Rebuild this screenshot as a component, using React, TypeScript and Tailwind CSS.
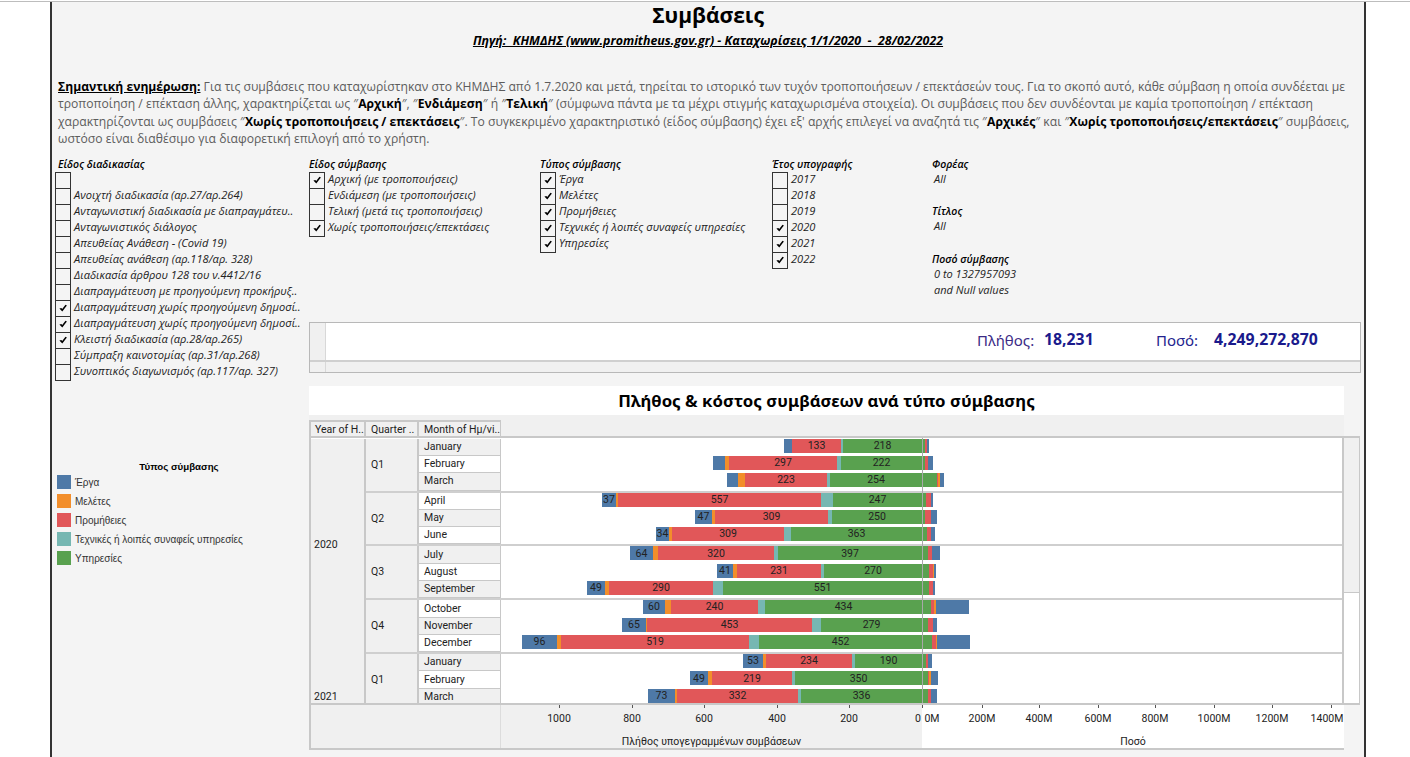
import { Fragment } from "react";

const BLUE = "#4e79a7";
const ORANGE = "#f28e2b";
const RED = "#e15759";
const TEAL = "#76b7b2";
const GREEN = "#59a14f";

const procedures = [
  ["", false],
  ["Ανοιχτή διαδικασία (αρ.27/αρ.264)", false],
  ["Ανταγωνιστική διαδικασία με διαπραγμάτευ..", false],
  ["Ανταγωνιστικός διάλογος", false],
  ["Απευθείας Ανάθεση - (Covid 19)", false],
  ["Απευθείας ανάθεση (αρ.118/αρ. 328)", false],
  ["Διαδικασία άρθρου 128 του ν.4412/16", false],
  ["Διαπραγμάτευση με προηγούμενη προκήρυξ..", false],
  ["Διαπραγμάτευση χωρίς προηγούμενη δημοσί..", true],
  ["Διαπραγμάτευση χωρίς προηγούμενη δημοσί..", true],
  ["Κλειστή διαδικασία (αρ.28/αρ.265)", true],
  ["Σύμπραξη καινοτομίας (αρ.31/αρ.268)", false],
  ["Συνοπτικός διαγωνισμός (αρ.117/αρ. 327)", false],
] as [string, boolean][];

const contractKinds = [
  ["Αρχική (με τροποποιήσεις)", true],
  ["Ενδιάμεση (με τροποποιήσεις)", false],
  ["Τελική (μετά τις τροποποιήσεις)", false],
  ["Χωρίς τροποποιήσεις/επεκτάσεις", true],
] as [string, boolean][];

const contractTypes = [
  ["Έργα", true],
  ["Μελέτες", true],
  ["Προμήθειες", true],
  ["Τεχνικές ή λοιπές συναφείς υπηρεσίες", true],
  ["Υπηρεσίες", true],
] as [string, boolean][];

const years = [
  ["2017", false],
  ["2018", false],
  ["2019", false],
  ["2020", true],
  ["2021", true],
  ["2022", true],
] as [string, boolean][];

const legend = [
  ["Έργα", BLUE],
  ["Μελέτες", ORANGE],
  ["Προμήθειες", RED],
  ["Τεχνικές ή λοιπές συναφείς υπηρεσίες", TEAL],
  ["Υπηρεσίες", GREEN],
];

// pixel edges of the bar pieces: start, blue, orange, red, teal, green, red, orange, blue
type Row = { month: string; edges: number[]; blue?: string; red: string; green: string };

const data: { year: string; quarters: { name: string; rows: Row[] }[] }[] = [
  {
    year: "2020",
    quarters: [
      {
        name: "Q1",
        rows: [
          { month: "January", edges: [784, 792, 792, 841, 843, 925, 927, 927, 929], red: "133", green: "218" },
          { month: "February", edges: [713, 725, 729, 837, 841, 925, 928, 928, 933], red: "297", green: "222" },
          { month: "March", edges: [727, 738, 745, 827, 830, 937, 938, 940, 944], red: "223", green: "254" },
        ],
      },
      {
        name: "Q2",
        rows: [
          { month: "April", edges: [602, 616, 618, 821, 833, 926, 931, 931, 933], blue: "37", red: "557", green: "247" },
          { month: "May", edges: [695, 712, 715, 828, 832, 925, 931, 931, 937], blue: "47", red: "309", green: "250" },
          { month: "June", edges: [656, 669, 672, 784, 791, 927, 931, 931, 935], blue: "34", red: "309", green: "363" },
        ],
      },
      {
        name: "Q3",
        rows: [
          { month: "July", edges: [630, 653, 658, 774, 778, 928, 932, 932, 940], blue: "64", red: "320", green: "397" },
          { month: "August", edges: [717, 733, 737, 821, 824, 929, 933, 934, 936], blue: "41", red: "231", green: "270" },
          { month: "September", edges: [587, 605, 609, 713, 723, 929, 933, 933, 935], blue: "49", red: "290", green: "551" },
        ],
      },
      {
        name: "Q4",
        rows: [
          { month: "October", edges: [643, 665, 671, 758, 765, 931, 934, 936, 969], blue: "60", red: "240", green: "434" },
          { month: "November", edges: [622, 646, 647, 812, 821, 928, 933, 933, 937], blue: "65", red: "453", green: "279" },
          { month: "December", edges: [522, 557, 561, 749, 759, 932, 936, 937, 970], blue: "96", red: "519", green: "452" },
        ],
      },
    ],
  },
  {
    year: "2021",
    quarters: [
      {
        name: "Q1",
        rows: [
          { month: "January", edges: [743, 763, 766, 852, 855, 926, 928, 928, 932], blue: "53", red: "234", green: "190" },
          { month: "February", edges: [690, 708, 712, 792, 795, 928, 929, 931, 938], blue: "49", red: "219", green: "350" },
          { month: "March", edges: [648, 675, 677, 798, 801, 928, 931, 931, 937], blue: "73", red: "332", green: "336" },
        ],
      },
    ],
  },
];

const leftTicks = [
  ["1000", 559],
  ["800", 632],
  ["600", 704],
  ["400", 777],
  ["200", 849],
  ["0", 918],
] as [string, number][];

const rightTicks = [
  ["0M", 932, 923],
  ["200M", 982, 982],
  ["400M", 1039, 1039],
  ["600M", 1098, 1098],
  ["800M", 1155, 1155],
  ["1000M", 1214, 1214],
  ["1200M", 1272, 1272],
  ["1400M", 1327, 1331],
] as [string, number, number][];

function Tick() {
  return (
    <svg viewBox="0 0 10 10" className="h-[10px] w-[10px]">
      <path d="M1.4 5.6 L3.4 4.9 L4.2 6 L7.5 1.8 L8.9 2.4 L4.3 8.6 Z" fill="#000" />
    </svg>
  );
}

function CheckList({ items, width = "w-[226px]" }: { items: [string, boolean][]; width?: string }) {
  return (
    <div className={width}>
      {items.map(([label, checked], i) => (
        <div key={i} className="flex h-4 items-start">
          <div className="flex h-[17px] w-[16px] shrink-0 items-center justify-center border border-[#333]">
            {checked ? <Tick /> : null}
          </div>
          <span className="ml-[3px] whitespace-nowrap text-[11.1px] leading-[13px] italic text-[#222]">{label}</span>
        </div>
      ))}
    </div>
  );
}

function FilterTitle({ children }: { children: string }) {
  return <div className="h-[15px] whitespace-nowrap text-[10.5px] leading-[15px] font-semibold italic text-black">{children}</div>;
}

function Bar({ row }: { row: Row }) {
  const e = row.edges;
  const pieces: [number, number, string, string?][] = [
    [e[0], e[1], BLUE, row.blue],
    [e[1], e[2], ORANGE],
    [e[2], e[3], RED, row.red],
    [e[3], e[4], TEAL],
    [e[4], 922, GREEN, row.green],
    [922, e[5], GREEN],
    [e[5], e[6], RED],
    [e[6], e[7], ORANGE],
    [e[7], e[8], BLUE],
  ];
  return (
    <div className="flex h-[14px]" style={{ marginLeft: e[0] - 501 }}>
      {pieces.map(([from, to, color, label], i) => (
        <div
          key={i}
          className="flex h-full shrink-0 items-center justify-center overflow-visible text-[10.5px] text-[#222]"
          style={{ width: to - from, backgroundColor: color }}
        >
          {label}
        </div>
      ))}
    </div>
  );
}

function StatsBox() {
  return (
    <div className="mt-[15px] flex h-[51px] w-[1052px] flex-col border border-[#b8b8b8] bg-white">
      <div className="flex min-h-0 flex-1">
        <div className="w-[16px] border-r border-[#d8d8d8] bg-[#f0f0f0]" />
        <div className="flex flex-1 items-center pb-[2px] pl-[651px] font-['Noto_Sans',sans-serif] text-[15px]">
          <span className="w-[67px] text-[#3b2b86]">Πλήθος:</span>
          <span className="w-[112px] text-[15.8px] font-bold text-[#1a1a8c]">18,231</span>
          <span className="w-[58px] text-[#23238e]">Ποσό:</span>
          <span className="text-[15.8px] font-bold text-[#1a1a8c]">4,249,272,870</span>
        </div>
      </div>
      <div className="flex h-[12px] border-t-2 border-[#cfcfcf] bg-[#f0f0f0]">
        <div className="w-[16px] border-r border-[#d8d8d8]" />
      </div>
    </div>
  );
}

function Chart() {
  return (
    <div className="mt-[13px] font-['Roboto',sans-serif] text-[#222]">
      <div className="flex h-[29px] w-[1035px] items-center justify-center bg-white font-['Noto_Sans',sans-serif] text-[16.8px] font-bold text-black">
        Πλήθος &amp; κόστος συμβάσεων ανά τύπο σύμβασης
      </div>
      <div className="flex h-[21px] w-[1035px] items-end bg-[#f0f0f0] text-[10.5px] leading-[12px]">
        <div className="flex h-4 w-[57px] items-center border-2 border-b-0 border-[#c8c8c8] pt-[3px] pl-1 whitespace-nowrap">Year of H..</div>
        <div className="flex h-4 w-[53px] items-center border-t-2 border-r-2 border-[#c8c8c8] pt-[3px] pl-[5px] whitespace-nowrap">Quarter ..</div>
        <div className="flex h-4 w-[82px] items-center border-t-2 border-r border-[#c8c8c8] pt-[3px] pl-[5px] whitespace-nowrap">Month of Hμ/vi..</div>
      </div>
      <div className="flex w-[1051px]">
        <div className="relative h-[269px] w-[1035px] overflow-hidden border-y-2 border-l-2 border-[#c8c8c8] bg-white pt-px text-[10.5px]">
          {data.map((y) => (
            <div key={y.year} className="flex">
              <div
                className={
                  y.year === "2020"
                    ? "flex w-[55px] shrink-0 items-center border-r-2 border-[#c8c8c8] bg-[#f0f0f0] pb-[3px] pl-[3px]"
                    : "flex w-[55px] shrink-0 items-end border-r-2 border-[#c8c8c8] bg-[#f0f0f0] pb-[3px] pl-[3px]"
                }
              >
                {y.year}
              </div>
              <div className="flex-1">
                {y.quarters.map((q) => (
                  <div key={q.name} className="flex border-b-2 border-[#cfcfcf]">
                    <div className="flex w-[53px] shrink-0 items-center border-r-2 border-[#c8c8c8] bg-[#f0f0f0] pl-[5px]">{q.name}</div>
                    <div className="flex-1">
                      {q.rows.map((r, i) => (
                        <div key={r.month} className="flex h-[17.3px]">
                          <div
                            className={
                              (i + (q.name === "Q1" ? 0 : q.name === "Q2" ? 1 : q.name === "Q3" ? 0 : 1)) % 2 === 0
                                ? "flex w-[82px] shrink-0 items-center border-r border-b border-[#c8c8c8] bg-[#f0f0f0] pl-[5px]"
                                : "flex w-[82px] shrink-0 items-center border-r border-b border-[#c8c8c8] bg-white pl-[5px]"
                            }
                          >
                            {r.month}
                          </div>
                          <div className="flex-1 bg-white">
                            <Bar row={r} />
                          </div>
                        </div>
                      ))}
                    </div>
                  </div>
                ))}
              </div>
            </div>
          ))}
          <div className="absolute top-0 bottom-0 left-[611px] w-px bg-[#a8a8a8]" />
          <div className="absolute top-0 right-0 bottom-0 w-[2px] bg-[#c8c8c8]" />
        </div>
        <div className="h-[269px] w-[16px] border-y-2 border-r border-[#c8c8c8] bg-white">
          <div className="h-[155px] border-b border-[#c8c8c8] bg-[#f0f0f0]" />
        </div>
      </div>
      <div className="relative flex h-[45px] w-[1035px] text-[10.5px]">
        <div className="flex w-[613px] border-b-2 border-l-2 border-[#c8c8c8] bg-[#f0f0f0]">
          <div className="w-[190px] border-r border-[#dcdcdc]" />
          <div className="flex flex-1 items-end justify-center leading-[12px]">Πλήθος υπογεγραμμένων συμβάσεων</div>
        </div>
        <div className="flex flex-1 items-end justify-center border-b-2 border-[#c8c8c8] bg-white leading-[12px]">Ποσό</div>
        {leftTicks.map(([label, x]) => (
          <Fragment key={label}>
            {label !== "0" ? <div className="absolute top-0 h-[3px] w-px bg-[#555]" style={{ left: x - 309 }} /> : null}
            <div className="absolute top-[6px] -translate-x-1/2" style={{ left: x - 309 }}>
              {label}
            </div>
          </Fragment>
        ))}
        <div className="absolute top-0 h-[3px] w-px bg-[#555]" style={{ left: 613 }} />
        {rightTicks.map(([label, x, tick]) => (
          <Fragment key={label}>
            {label !== "0M" ? <div className="absolute top-0 h-[3px] w-px bg-[#555]" style={{ left: tick - 309 }} /> : null}
            <div className="absolute top-[6px] -translate-x-1/2" style={{ left: x - 309 }}>
              {label}
            </div>
          </Fragment>
        ))}
      </div>
    </div>
  );
}

export default function App() {
  return (
    <div className="h-[757px] w-[1410px] overflow-hidden bg-white font-['Open_Sans',sans-serif]">
      <div className="mt-px h-[756px] border-t border-[#bdbdbd]">
        <div className="ml-[50px] h-full w-[1316px] border-x-2 border-[#333] bg-[#f4f4f4]">
          <div className="text-center">
            <h1 className="pt-px text-[21px] leading-[24px] font-bold text-black">Συμβάσεις</h1>
            <p className="mt-[5px] text-[12.4px] leading-[18px] font-bold italic text-black underline">
              Πηγή:&nbsp; ΚΗΜΔΗΣ (www.promitheus.gov.gr) - Καταχωρίσεις 1/1/2020&nbsp; -&nbsp; 28/02/2022
            </p>
          </div>
          <div className="mt-[28px] ml-[6px] whitespace-nowrap text-[12.15px] leading-[17.4px] text-[#5c5c5c]">
            <div>
              <b className="font-bold text-black underline">Σημαντική ενημέρωση:</b> Για τις συμβάσεις που καταχωρίστηκαν στο ΚΗΜΔΗΣ από 1.7.2020 και μετά, τηρείται το ιστορικό των τυχόν τροποποιήσεων / επεκτάσεών τους. Για το σκοπό αυτό, κάθε σύμβαση η οποία συνδέεται με
            </div>
            <div>
              τροποποίηση / επέκταση άλλης, χαρακτηρίζεται ως ″<b className="text-black">Αρχική</b>″, ″<b className="text-black">Ενδιάμεση</b>″ ή ″<b className="text-black">Τελική</b>″ (σύμφωνα πάντα με τα μέχρι στιγμής καταχωρισμένα στοιχεία). Οι συμβάσεις που δεν συνδέονται με καμία τροποποίηση / επέκταση
            </div>
            <div>
              χαρακτηρίζονται ως συμβάσεις ″<b className="text-black">Χωρίς τροποποιήσεις / επεκτάσεις</b>″. Το συγκεκριμένο χαρακτηριστικό (είδος σύμβασης) έχει εξ' αρχής επιλεγεί να αναζητά τις ″<b className="text-black">Αρχικές</b>″ και ″<b className="text-black">Χωρίς τροποποιήσεις/επεκτάσεις</b>″ συμβάσεις,
            </div>
            <div>ωστόσο είναι διαθέσιμο για διαφορετική επιλογή από το χρήστη.</div>
          </div>
          <div className="mt-[9px] flex">
            <div className="w-[257px] shrink-0">
              <div className="pl-[6px]">
                <FilterTitle>Είδος διαδικασίας</FilterTitle>
              </div>
              <div className="pl-[3px]">
                <CheckList items={procedures} />
              </div>
              <div className="mt-[80px] pl-[5px] font-['Liberation_Sans',sans-serif] text-[10px]">
                <div className="h-[13px] pr-[8px] text-center text-[9.7px] font-bold text-black">Τύπος σύμβασης</div>
                {legend.map(([label, color]) => (
                  <div key={label} className="flex h-[19px] items-center">
                    <div className="h-[14px] w-[14px]" style={{ backgroundColor: color }} />
                    <span className="ml-[4px] whitespace-nowrap text-[#333]">{label}</span>
                  </div>
                ))}
              </div>
            </div>
            <div>
              <div className="flex h-[150px]">
                <div className="w-[231px]">
                  <FilterTitle>Είδος σύμβασης</FilterTitle>
                  <CheckList items={contractKinds} width="w-[231px]" />
                </div>
                <div className="w-[232px]">
                  <FilterTitle>Τύπος σύμβασης</FilterTitle>
                  <CheckList items={contractTypes} width="w-[232px]" />
                </div>
                <div className="w-[160px]">
                  <FilterTitle>Έτος υπογραφής</FilterTitle>
                  <CheckList items={years} width="w-[160px]" />
                </div>
                <div className="text-[11px] leading-4 italic text-[#222]">
                  <div className="h-[14px]">
                    <FilterTitle>Φορέας</FilterTitle>
                  </div>
                  <div className="pl-[2px]">All</div>
                  <div className="mt-[17px] h-[14px]">
                    <FilterTitle>Τίτλος</FilterTitle>
                  </div>
                  <div className="pl-[2px]">All</div>
                  <div className="mt-[18px] h-[14px]">
                    <FilterTitle>Ποσό σύμβασης</FilterTitle>
                  </div>
                  <div className="pl-[2px]">0 to 1327957093</div>
                  <div className="pl-[2px]">and Null values</div>
                </div>
              </div>
              <StatsBox />
              <Chart />
            </div>
          </div>
        </div>
      </div>
    </div>
  );
}
